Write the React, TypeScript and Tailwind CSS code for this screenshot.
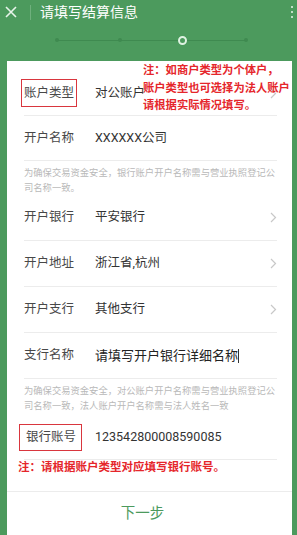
import React from "react";

const Chevron = () => (
  <svg width="7" height="11" viewBox="0 0 7 11" className="shrink-0">
    <polyline points="1,1 5.5,5.5 1,10" fill="none" stroke="#c8c8c8" strokeWidth="1.2" />
  </svg>
);

const Row = ({
  label,
  value,
  arrow,
  h = "h-[46px]",
}: {
  label: React.ReactNode;
  value: React.ReactNode;
  arrow?: boolean;
  h?: string;
}) => (
  <div className={`flex items-center ${h} border-b border-[#ececec]`}>
    <div className="w-[71px] shrink-0 text-[12.5px] text-[#484848]">{label}</div>
    <div className="flex-1 text-[12.5px] text-[#333]">{value}</div>
    {arrow && <Chevron />}
  </div>
);

const Note = ({ children }: { children: React.ReactNode }) => (
  <div className="pt-[4px] text-[9.3px] leading-[15px] text-[#b9b9b9]">{children}</div>
);

export default function App() {
  return (
    <div
      className="w-full h-[535px] bg-[#4c9a5d] flex flex-col overflow-hidden"
      style={{ fontFamily: "Roboto, 'Noto Sans CJK SC', sans-serif" }}
    >
      {/* title bar */}
      <div className="h-[24px] flex items-center">
        <svg width="12" height="12" viewBox="0 0 12 12" className="ml-[5px]">
          <path d="M1 1 L11 11 M11 1 L1 11" stroke="#e8f4ea" strokeWidth="1.6" />
        </svg>
        <div className="ml-[13px] w-px h-[15px] bg-[#6fb07d]" />
        <div className="ml-[9px] text-[14px] text-white">请填写结算信息</div>
        <div className="ml-auto mr-[4px] flex flex-col gap-[3px]">
          <span className="w-[2px] h-[2px] bg-[#e8f4ea] rounded-full" />
          <span className="w-[2px] h-[2px] bg-[#e8f4ea] rounded-full" />
          <span className="w-[2px] h-[2px] bg-[#e8f4ea] rounded-full" />
        </div>
      </div>

      {/* steps */}
      <div className="h-[37px] pt-[12px]">
        <div className="relative ml-[55px] w-[193px] h-[8px] flex items-center justify-between">
          <div className="absolute left-[2px] right-[2px] top-[3.5px] h-px bg-[#3f8a50]" />
          <span className="relative w-[4px] h-[4px] rounded-full bg-[#3f8a50]" />
          <span className="relative w-[4px] h-[4px] rounded-full bg-[#3f8a50] ml-[2px]" />
          <span className="relative w-[9px] h-[9px] rounded-full bg-[#4c9a5d] border-2 border-[#dff2e2]" />
          <span className="relative w-[4px] h-[4px] rounded-full bg-[#3f8a50]" />
        </div>
      </div>

      {/* card */}
      <div className="relative flex-1 ml-[7px] mr-[5px] bg-white flex flex-col">
        <div className="pl-[17px] pr-[15px] pt-[10px]">
          <Row
            h="h-[45px]"
            label={
              <span className="-ml-[3px] inline-block px-[2px] py-[4px] border-[1.5px] border-[#d9363e]">
                账户类型
              </span>
            }
            value="对公账户"
            arrow
          />
          <Row h="h-[45px]" label="开户名称" value="XXXXXX公司" />
          <Note>为确保交易资金安全，银行账户开户名称需与营业执照登记公司名称一致。</Note>
          <Row label="开户银行" value="平安银行" arrow />
          <Row label="开户地址" value="浙江省,杭州" arrow />
          <Row label="开户支行" value="其他支行" arrow />
          <Row
            label="支行名称"
            value={
              <span className="text-[13px] text-[#222]">
                请填写开户银行详细名称<span className="inline-block w-px h-[14px] bg-[#333] align-middle" />
              </span>
            }
          />
          <Note>
            为确保交易资金安全，对公账户开户名称需与营业执照登记公司名称一致，法人账户开户名称需与法人姓名一致
          </Note>
          <div className="mt-[3px]">
            <Row
              h="h-[44px]"
              label={
                <span className="-ml-[5px] inline-block pl-[6px] pr-[5px] py-[3px] border-[1.5px] border-[#d9363e]">
                  银行账号
                </span>
              }
              value="123542800008590085"
            />
          </div>
          <div className="-ml-[6px] text-[11.5px] leading-[14px] font-bold text-[#e5262b] whitespace-nowrap">
            注：请根据账户类型对应填写银行账号。
          </div>
        </div>

        <div className="mt-auto h-[44px] border-t border-[#ececec] flex items-center justify-center">
          <span className="text-[14.5px] text-[#4c9a5d] -ml-[14px]">下一步</span>
        </div>

        {/* red annotation */}
        <div className="absolute left-[136px] top-[1px] text-[11.3px] leading-[17.5px] font-bold text-[#e5262b] whitespace-nowrap">
          <div>注：如商户类型为个体户，</div>
          <div>账户类型也可选择为法人账户</div>
          <div>请根据实际情况填写。</div>
        </div>
      </div>
    </div>
  );
}
